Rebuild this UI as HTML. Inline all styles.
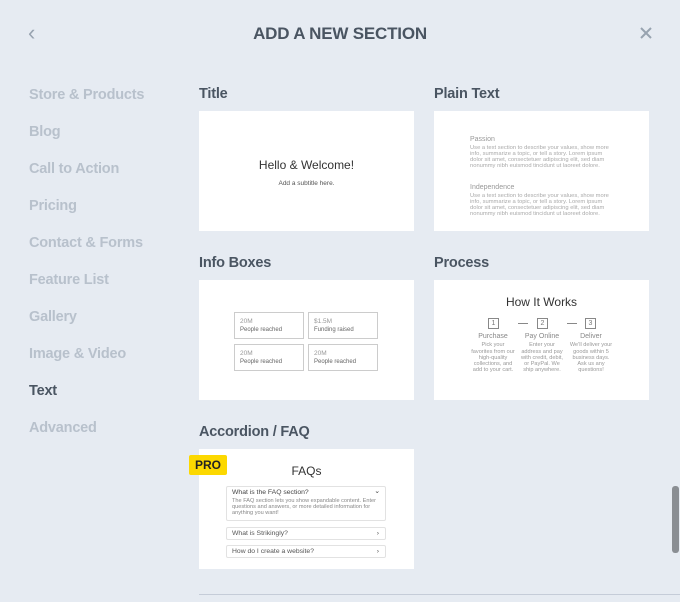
<!DOCTYPE html>
<html><head><style>
body{margin:0;width:680px;height:602px;background:#e6ebf2;font-family:"Liberation Sans",sans-serif;position:relative;overflow:hidden}
.a{position:absolute}
.h{left:0;width:680px;top:24px;text-align:center;font-size:17px;font-weight:bold;color:#4a5562;letter-spacing:-.2px}
.nav{left:29px;font-size:14.5px;font-weight:bold;color:#b8c1cc;letter-spacing:-.2px}
.lab{font-size:14.5px;font-weight:bold;color:#4a5562;letter-spacing:-.2px}
.card{background:#fff;width:215px;height:120px}
.box{position:absolute;width:70px;height:27px;border:1.5px solid #ccc;font-size:6.5px;color:#999;padding:4px 0 0 5px;box-sizing:border-box;line-height:9px}
.box b{color:#666;font-weight:normal;display:block;font-size:6px}
.pt{position:absolute;left:36px;width:146px;font-size:5.8px;line-height:6px;color:#aaa}
.st{position:absolute;width:44px;text-align:center;font-size:5.6px;line-height:6.3px;color:#999;top:54px}
.st i{font-style:normal;font-size:7px;display:block;margin-bottom:2px;color:#888}
.num{position:absolute;top:38px;width:11px;height:11px;border:1px solid #888;font-size:7px;text-align:center;line-height:10px;color:#777;box-sizing:border-box}
.q{position:absolute;left:27px;width:160px;border:1px solid #e2e2e2;border-radius:2px;font-size:6.8px;color:#555;padding:2px 5px;box-sizing:border-box}
</style></head><body>
<div class="a" style="left:28px;top:20px;font-size:22px;color:#98a3b0">&#8249;</div>
<div class="a h">ADD A NEW SECTION</div>
<svg class="a" style="left:640px;top:27px" width="12" height="12"><path d="M1 1L11 11M11 1L1 11" stroke="#98a3b0" stroke-width="2"/></svg>
<div class="a nav" style="top:87px">Store &amp; Products</div>
<div class="a nav" style="top:124px">Blog</div>
<div class="a nav" style="top:161px">Call to Action</div>
<div class="a nav" style="top:198px">Pricing</div>
<div class="a nav" style="top:235px">Contact &amp; Forms</div>
<div class="a nav" style="top:272px">Feature List</div>
<div class="a nav" style="top:309px">Gallery</div>
<div class="a nav" style="top:346px">Image &amp; Video</div>
<div class="a nav" style="top:383px;color:#4a5562">Text</div>
<div class="a nav" style="top:420px">Advanced</div>

<div class="a lab" style="left:199px;top:86px">Title</div>
<div class="a lab" style="left:434px;top:86px">Plain Text</div>
<div class="a lab" style="left:199px;top:255px">Info Boxes</div>
<div class="a lab" style="left:434px;top:255px">Process</div>
<div class="a lab" style="left:199px;top:424px">Accordion / FAQ</div>

<div class="a card" style="left:199px;top:111px">
<div class="a" style="top:47px;width:215px;text-align:center;font-size:12px;color:#333">Hello &amp; Welcome!</div>
<div class="a" style="top:69px;width:215px;text-align:center;font-size:6.5px;color:#555">Add a subtitle here.</div>
</div>
<div class="a card" style="left:434px;top:111px">
<div class="pt" style="top:24px"><span style="font-size:7px;color:#999;line-height:10px">Passion</span><br>Use a text section to describe your values, show more info, summarize a topic, or tell a story. Lorem ipsum dolor sit amet, consectetuer adipiscing elit, sed diam nonummy nibh euismod tincidunt ut laoreet dolore.</div>
<div class="pt" style="top:72px"><span style="font-size:7px;color:#999;line-height:10px">Independence</span><br>Use a text section to describe your values, show more info, summarize a topic, or tell a story. Lorem ipsum dolor sit amet, consectetuer adipiscing elit, sed diam nonummy nibh euismod tincidunt ut laoreet dolore.</div>
</div>
<div class="a card" style="left:199px;top:280px">
<div class="box" style="left:35px;top:32px">20M<b>People reached</b></div>
<div class="box" style="left:109px;top:32px">$1.5M<b>Funding raised</b></div>
<div class="box" style="left:35px;top:64px">20M<b>People reached</b></div>
<div class="box" style="left:109px;top:64px">20M<b>People reached</b></div>
</div>
<div class="a card" style="left:434px;top:280px">
<div class="a" style="top:15px;width:215px;text-align:center;font-size:12px;color:#333">How It Works</div>
<div class="num" style="left:54px">1</div><div class="a" style="left:84px;top:43px;width:10px;border-top:1px solid #888"></div>
<div class="num" style="left:103px">2</div><div class="a" style="left:133px;top:43px;width:10px;border-top:1px solid #888"></div>
<div class="num" style="left:151px">3</div>
<div class="st" style="left:37px"><i>Purchase</i>Pick your favorites from our high-quality collections, and add to your cart.</div>
<div class="st" style="left:86px"><i>Pay Online</i>Enter your address and pay with credit, debit, or PayPal. We ship anywhere.</div>
<div class="st" style="left:135px"><i>Deliver</i>We'll deliver your goods within 5 business days. Ask us any questions!</div>
</div>
<div class="a card" style="left:199px;top:449px">
<div class="a" style="top:15px;width:215px;text-align:center;font-size:12px;color:#333">FAQs</div>
<div class="q" style="top:37px;height:35px;color:#444">What is the FAQ section?<span style="position:absolute;right:5px;top:0">&#8964;</span><div style="font-size:5.6px;line-height:6px;color:#888;margin-top:2px">The FAQ section lets you show expandable content. Enter questions and answers, or more detailed information for anything you want!</div></div>
<div class="q" style="top:78px;height:13px">What is Strikingly?<span style="position:absolute;right:6px">&#8250;</span></div>
<div class="q" style="top:96px;height:13px">How do I create a website?<span style="position:absolute;right:6px">&#8250;</span></div>
</div>
<div class="a" style="left:189px;top:455px;width:38px;height:20px;background:#fcd800;border-radius:2px;font-size:12px;font-weight:bold;color:#222;text-align:center;line-height:20px">PRO</div>
<div class="a" style="left:199px;top:594px;width:481px;border-top:1px solid #c5ccd8"></div>
<div class="a" style="left:672px;top:486px;width:7px;height:67px;background:#8a8e93;border-radius:3px"></div>
</body></html>
